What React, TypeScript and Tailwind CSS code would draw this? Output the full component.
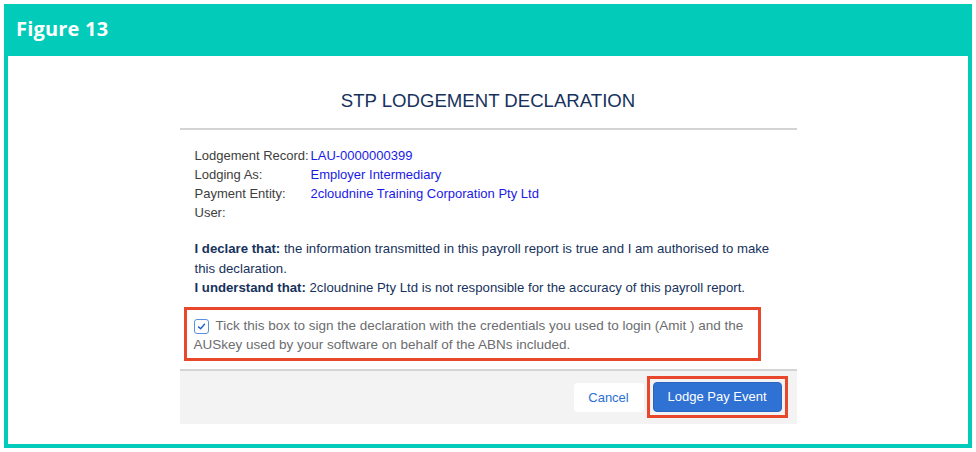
import React from 'react';

const rows: [string, string][] = [
  ['Lodgement Record:', 'LAU-0000000399'],
  ['Lodging As:', 'Employer Intermediary'],
  ['Payment Entity:', '2cloudnine Training Corporation Pty Ltd'],
  ['User:', ''],
];

export default function App() {
  return (
    <div className="w-[976px] h-[452px] bg-white pt-[4px] pl-[4px]">
      <div className="w-[968px] h-[444px] bg-[#02cbb9] flex flex-col px-[4px] pb-[4px]">
        {/* figure caption */}
        <div className="h-[52px] flex items-center pl-[8px] pb-[2px] text-white font-bold text-[20px] font-['Open_Sans',sans-serif] tracking-[0.2px]">
          Figure 13
        </div>

        <div className="flex-1 bg-white flex justify-center font-['Liberation_Sans',Arial,sans-serif]">
          <div className="w-[617px] flex flex-col">
            <div className="h-[72px] flex items-center justify-center pt-[18px] text-[18.6px] text-[#16325c]">
              STP LODGEMENT DECLARATION
            </div>
            <div className="h-[2px] bg-[#d4d4d4]" />

            <div className="px-[15px] pt-[16px] text-[13px] leading-[19px]">
              {rows.map(([label, value]) => (
                <div key={label} className="flex h-[19px]">
                  <span className="w-[116px] text-[#3e3e3c] whitespace-nowrap">{label}</span>
                  <span className="text-[#1a1ae6]">{value}</span>
                </div>
              ))}

              <p className="mt-[17px] text-[#16325c] text-[13.2px] leading-[19.5px] whitespace-nowrap">
                <b>I declare that:</b> the information transmitted in this payroll report is true and I am authorised to make
                <br />
                this declaration.
                <br />
                <b>I understand that:</b> 2cloudnine Pty Ltd is not responsible for the accuracy of this payroll report.
              </p>
            </div>

            <div className="ml-[4px] mt-[9px] w-[577px] h-[54px] border-[3px] border-[#e8472c] flex pl-[7px] pt-[6px]">
              <div className="mt-[3px] w-[15px] h-[15px] shrink-0 rounded-[3px] border border-[#5b8fe0] flex items-center justify-center">
                <svg viewBox="0 0 12 12" className="w-[9px] h-[9px]">
                  <path d="M2 6.5 L4.8 9 L10 3" fill="none" stroke="#1d5fc9" strokeWidth="1.8" strokeLinecap="round" strokeLinejoin="round" />
                </svg>
              </div>
              <p className="ml-[7px] text-[13.5px] leading-[19px] text-[#6b6d70] whitespace-nowrap">
                Tick this box to sign the declaration with the credentials you used to login (Amit ) and the
                <br />
                <span className="-ml-[22px]">AUSkey used by your software on behalf of the ABNs included.</span>
              </p>
            </div>

            <div className="mt-[8px] h-[2px] bg-[#d4d4d4]" />
            <div className="h-[53px] bg-[#f3f3f3] flex items-center justify-end pr-[9px] gap-[3px]">
              <button className="w-[70px] h-[29px] mt-[1px] bg-white rounded-[4px] text-[13px] text-[#2a6fd2]">
                Cancel
              </button>
              <div className="border-[3px] border-[#e8472c] p-[3px]">
                <button className="w-[129px] h-[30px] bg-[#2f72d3] rounded-[4px] text-[13px] text-white border border-[#2a66c0]">
                  Lodge Pay Event
                </button>
              </div>
            </div>
          </div>
        </div>
      </div>
    </div>
  );
}
